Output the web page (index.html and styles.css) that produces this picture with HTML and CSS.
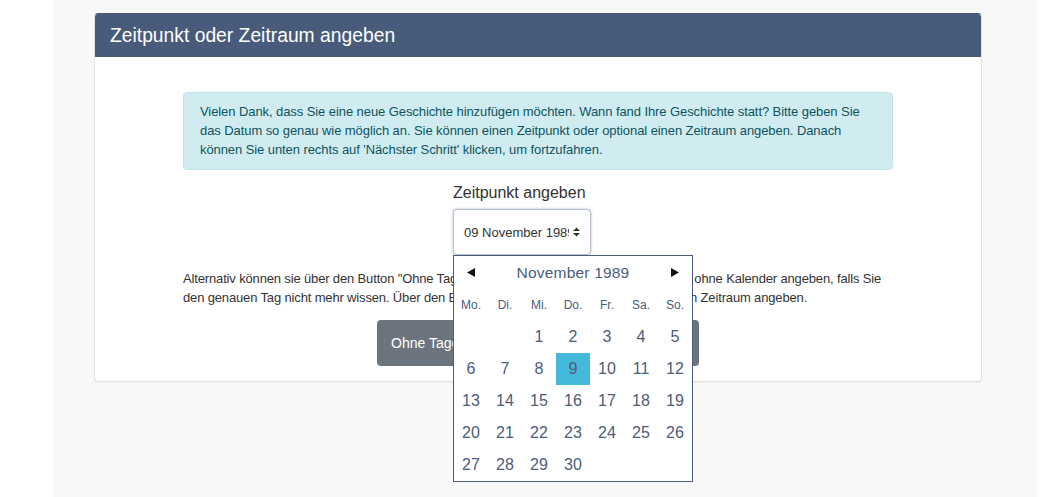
FILE: index.html
```html
<!DOCTYPE html>
<html lang="de">
<head>
  <meta charset="UTF-8">
  <title>Zeitpunkt oder Zeitraum angeben</title>
  <link rel="stylesheet" href="styles.css">
</head>
<body>
  <div class="page">
    <div class="card">
      <div class="card-header">Zeitpunkt oder Zeitraum angeben</div>
      <div class="card-body">
        <div class="alert">
          Vielen Dank, dass Sie eine neue Geschichte hinzufügen möchten. Wann fand Ihre Geschichte statt? Bitte geben Sie
          das Datum so genau wie möglich an. Sie können einen Zeitpunkt oder optional einen Zeitraum angeben. Danach
          können Sie unten rechts auf 'Nächster Schritt' klicken, um fortzufahren.
        </div>

        <div class="date-field">
          <div class="field-label">Zeitpunkt angeben</div>
          <div class="date-select">
            <span class="date-value">09 November 1989</span>
            <svg class="updown" width="7" height="10" viewBox="0 0 7 10"><polygon points="3.5,0.5 7,4 0,4" fill="#333"/><polygon points="0,6 7,6 3.5,9.5" fill="#333"/></svg>
          </div>

          <div class="datepicker">
            <div class="dp-head">
              <span class="dp-nav"><svg width="8" height="9" viewBox="0 0 8 9"><polygon points="0,4.5 8,0 8,9" fill="#111"/></svg></span>
              <span class="dp-title">November 1989</span>
              <span class="dp-nav"><svg width="8" height="9" viewBox="0 0 8 9"><polygon points="8,4.5 0,0 0,9" fill="#111"/></svg></span>
            </div>
            <div class="dp-grid" id="dpGrid"></div>
          </div>
        </div>

        <p class="hint">
          Alternativ können sie über den Button "Ohne Tagesangabe" ein Datum mit Monat und Jahr ohne Kalender angeben, falls Sie
          den genauen Tag nicht mehr wissen. Über den Button "Zeitraum" können Sie optional einen Zeitraum angeben.
        </p>

        <div class="actions">
          <button class="btn">Ohne Tagesangabe</button>
          <button class="btn">Zeitraum angeben</button>
        </div>
      </div>
    </div>
  </div>

  <script>
    const weekdays = ["Mo.", "Di.", "Mi.", "Do.", "Fr.", "Sa.", "So."];
    const grid = document.getElementById("dpGrid");
    let html = "";
    weekdays.forEach(d => { html += `<span class="dp-wd">${d}</span>`; });
    // November 1989 starts on a Wednesday
    for (let i = 0; i < 2; i++) html += `<span class="dp-day"></span>`;
    for (let day = 1; day <= 30; day++) {
      html += `<span class="dp-day${day === 9 ? " active" : ""}">${day}</span>`;
    }
    grid.innerHTML = html;
  </script>
</body>
</html>
```

FILE: styles.css
```css
body { margin: 0; background: #fff; font-family: "Liberation Sans", Arial, sans-serif; color: #333; }
.page { margin-left: 53px; width: 984px; min-height: 100vh; background: #f8f8f8; padding: 13px 55px 0 41px; box-sizing: border-box; }

.card { background: #fff; border: 1px solid #e1e1e1; border-top-color: #485b7a; border-radius: 4px; box-shadow: 0 1px 1px rgba(0,0,0,0.04); }
.card-header { height: 43px; line-height: 43px; padding: 0 15px; background: #485b7a; color: #fff; font-size: 19.3px; border-radius: 3px 3px 0 0; }
.card-body { padding: 35px 88px 15px; }

.alert { padding: 9px 16px 10px; line-height: 19px; font-size: 13px; letter-spacing: -0.08px; color: #0c5460; background: #d1ecf1; border: 1px solid #bee5eb; border-radius: 4px; }

.date-field { position: relative; width: 170px; margin: 13px auto 0; }
.field-label { font-size: 16px; line-height: 20px; color: #333; margin-bottom: 6px; }
.date-select { display: flex; align-items: center; width: 138px; height: 46px; box-sizing: border-box; padding: 0 8px 0 10px; border: 1px solid #b9c3d1; border-radius: 4px; box-shadow: 0 0 2px 1px rgba(74, 93, 124, 0.22); background: #fff; }
.date-value { width: 105px; overflow: hidden; white-space: nowrap; font-size: 13px; color: #333; }
.updown { margin-left: 4px; }

.datepicker { position: absolute; top: 100%; left: 0; z-index: 5; width: 240px; box-sizing: border-box; border: 1px solid #4a5d7c; background: #fff; }
.dp-head { display: grid; grid-template-columns: 34px 1fr 34px; height: 33px; align-items: center; text-align: center; }
.dp-nav { display: flex; justify-content: center; align-items: center; }
.dp-title { font-size: 15.5px; color: #4a5d7c; letter-spacing: 0.2px; }
.dp-grid { display: grid; grid-template-columns: repeat(7, 34px); grid-auto-rows: 32px; }
.dp-wd { display: flex; align-items: center; justify-content: center; font-size: 12px; color: #4a5d7c; }
.dp-day { display: flex; align-items: center; justify-content: center; font-size: 16px; color: #4a5d7c; }
.dp-day.active { background: #45b9dc; }

.hint { margin: 14px 0 0; font-size: 13px; letter-spacing: -0.15px; line-height: 19px; color: #333; }

.actions { display: flex; justify-content: center; gap: 10px; margin-top: 13px; }
.btn { width: 156px; height: 46px; padding: 0 14px; text-align: left; background: #6c757d; color: #fff; border: none; border-radius: 4px; font-family: "Liberation Sans", Arial, sans-serif; font-size: 14px; }
```
